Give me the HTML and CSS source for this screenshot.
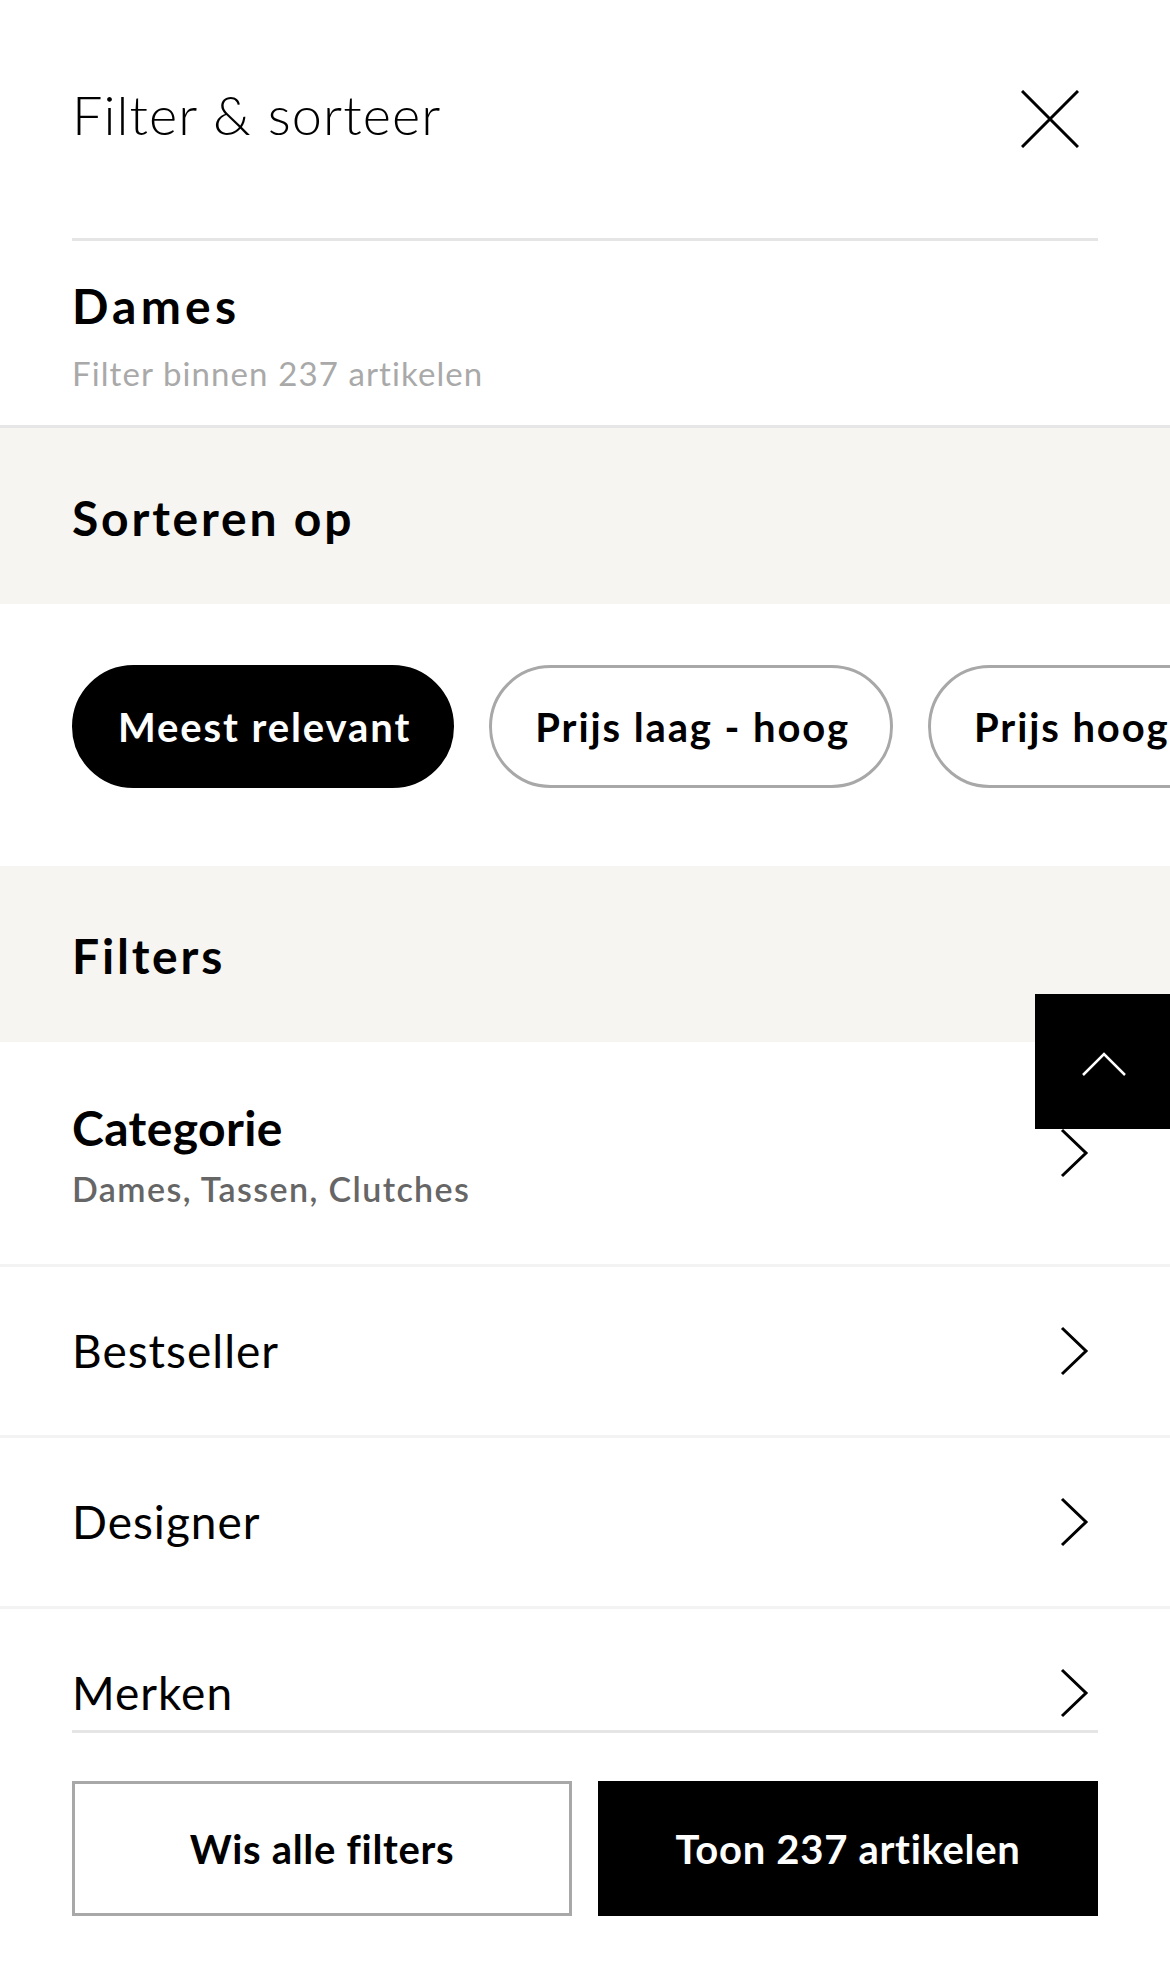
FILE: index.html
```html
<!DOCTYPE html>
<html lang="nl">
<head>
<meta charset="utf-8">
<title>Filter &amp; sorteer</title>
<link rel="stylesheet" href="styles.css">
</head>
<body>
<div class="sheet">
  <header class="top">
    <h1 class="title">Filter &amp; sorteer</h1>
    <button class="close" aria-label="Sluiten">
      <svg width="58" height="58" viewBox="0 0 58 58"><path d="M1 1 L57 57 M57 1 L1 57" stroke="#000" stroke-width="3" fill="none"/></svg>
    </button>
  </header>

  <section class="scope">
    <div class="scope-title">Dames</div>
    <div class="scope-sub">Filter binnen 237 artikelen</div>
  </section>

  <div class="band"><h2 class="band-title">Sorteren op</h2></div>

  <div class="pills">
    <span class="pill pill-active">Meest relevant</span>
    <span class="pill">Prijs laag - hoog</span>
    <span class="pill">Prijs hoog - laag</span>
  </div>

  <div class="band"><h2 class="band-title">Filters</h2></div>

  <ul class="rows">
    <li class="row row-tall">
      <div class="row-text">
        <div class="row-title">Categorie</div>
        <div class="row-sub">Dames, Tassen, Clutches</div>
      </div>
      <svg class="chev" width="40" height="60" viewBox="0 0 40 60"><path d="M4 7 L28 30 L4 53" stroke="#000" stroke-width="3" fill="none"/></svg>
    </li>
    <li class="row">
      <span class="row-label">Bestseller</span>
      <svg class="chev" width="40" height="60" viewBox="0 0 40 60"><path d="M4 7 L28 30 L4 53" stroke="#000" stroke-width="3" fill="none"/></svg>
    </li>
    <li class="row">
      <span class="row-label">Designer</span>
      <svg class="chev" width="40" height="60" viewBox="0 0 40 60"><path d="M4 7 L28 30 L4 53" stroke="#000" stroke-width="3" fill="none"/></svg>
    </li>
    <li class="row">
      <span class="row-label">Merken</span>
      <svg class="chev" width="40" height="60" viewBox="0 0 40 60"><path d="M4 7 L28 30 L4 53" stroke="#000" stroke-width="3" fill="none"/></svg>
    </li>
  </ul>
</div>

<button class="to-top" aria-label="Naar boven">
  <svg width="135" height="135" viewBox="0 0 135 135"><path d="M48 81 L69 60 L90 81" stroke="#fff" stroke-width="2.5" fill="none"/></svg>
</button>

<footer class="actions">
  <div class="actions-inner">
    <button class="btn btn-outline">Wis alle filters</button>
    <button class="btn btn-solid">Toon 237 artikelen</button>
  </div>
</footer>
</body>
</html>
```

FILE: styles.css
```css
* { box-sizing: border-box; }

html, body {
  margin: 0;
  padding: 0;
  background: #fff;
}

body {
  width: 1170px;
  height: 1985px;
  overflow: hidden;
  font-family: "Lato", "Liberation Sans", sans-serif;
  color: #000;
}

.sheet {
  display: flex;
  flex-direction: column;
}

/* header */
.top {
  margin: 0 72px;
  height: 241px;
  border-bottom: 3px solid #e5e5e5;
  display: flex;
  align-items: center;
  justify-content: space-between;
}

.title {
  margin: 0 0 8px 0;
  font-size: 54px;
  line-height: 54px;
  font-weight: 300;
  letter-spacing: 1.1px;
}

.close {
  border: 0;
  background: none;
  padding: 0;
  margin: 0 19px 0 0;
  display: flex;
}

/* scope */
.scope {
  padding: 41px 72px 35px;
  border-bottom: 3px solid #e6e6e6;
  display: flex;
  flex-direction: column;
}

.scope-title {
  font-size: 48px;
  line-height: 48px;
  font-weight: 700;
  letter-spacing: 4.2px;
  margin-bottom: 27px;
}

.scope-sub {
  font-size: 33px;
  line-height: 33px;
  font-weight: 400;
  letter-spacing: 1.1px;
  color: #a9a9a9;
}

/* grey bands */
.band {
  background: #f6f5f1;
  height: 176px;
  padding: 4px 72px 0;
  display: flex;
  align-items: center;
}

.band-title {
  margin: 0;
  font-size: 48px;
  line-height: 48px;
  font-weight: 700;
  letter-spacing: 2.8px;
}

/* pills */
.pills {
  display: flex;
  gap: 35px;
  padding: 61px 0 78px 72px;
  overflow: hidden;
  white-space: nowrap;
}

.pill {
  flex: none;
  height: 123px;
  padding: 0 40px 0 43px;
  border: 3px solid #a8a8a8;
  border-radius: 62px;
  display: flex;
  align-items: center;
  font-size: 40px;
  font-weight: 700;
  letter-spacing: 1.9px;
  background: #fff;
  color: #000;
}

.pill-active {
  background: #000;
  border-color: #000;
  color: #fff;
}

/* rows */
.rows {
  list-style: none;
  margin: 0;
  padding: 0;
}

.row {
  height: 171px;
  padding: 0 72px;
  border-bottom: 3px solid #f3f3f3;
  display: flex;
  align-items: center;
  justify-content: space-between;
}

.row-tall {
  height: 225px;
}

.row-text {
  display: flex;
  flex-direction: column;
  gap: 20px;
  padding-top: 3px;
}

.row-title {
  font-size: 48px;
  line-height: 48px;
  font-weight: 700;
  letter-spacing: 0.4px;
}

.row-sub {
  font-size: 34px;
  line-height: 34px;
  font-weight: 600;
  letter-spacing: 1.4px;
  color: #666;
}

.row-label {
  font-size: 46px;
  line-height: 46px;
  font-weight: 400;
  letter-spacing: 1px;
}

.chev {
  flex: none;
  display: block;
}

/* back to top */
.to-top {
  position: fixed;
  top: 994px;
  right: 0;
  width: 135px;
  height: 135px;
  border: 0;
  padding: 0;
  margin: 0;
  background: #000;
  display: flex;
}

/* footer */
.actions {
  position: fixed;
  left: 0;
  right: 0;
  bottom: 0;
  height: 255px;
  padding: 0 72px;
  background: #fff;
}

.actions-inner {
  border-top: 3px solid #e5e5e5;
  padding-top: 48px;
  display: grid;
  grid-template-columns: 1fr 1fr;
  gap: 26px;
}

.btn {
  height: 135px;
  margin: 0;
  padding: 0;
  font-family: "Lato", "Liberation Sans", sans-serif;
  font-size: 40px;
  font-weight: 700;
  letter-spacing: 0.7px;
  border-radius: 0;
}

.btn-outline {
  background: #fff;
  color: #000;
  border: 3px solid #a8a8a8;
}

.btn-solid {
  background: #000;
  color: #fff;
  border: 3px solid #000;
}
```
